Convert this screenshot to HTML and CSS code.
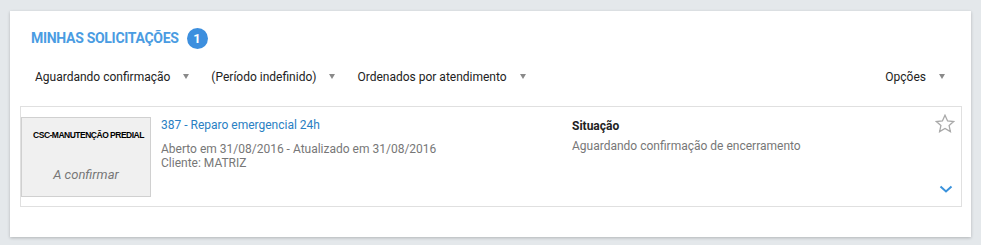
FILE: index.html
```html
<!DOCTYPE html>
<html lang="pt-BR">
<head>
<meta charset="utf-8">
<title>Minhas solicitações</title>
<link rel="stylesheet" href="styles.css">
</head>
<body>
<div class="card">
  <div class="header">
    <h2 class="title">MINHAS SOLICITAÇÕES</h2>
    <span class="badge">1</span>
  </div>
  <div class="filters">
    <div class="filter">Aguardando confirmação <span class="caret"></span></div>
    <div class="filter">(Período indefinido) <span class="caret"></span></div>
    <div class="filter">Ordenados por atendimento <span class="caret"></span></div>
    <div class="filter options">Opções <span class="caret"></span></div>
  </div>
  <div class="item">
    <div class="thumb">
      <div class="thumb-org">CSC-MANUTENÇÃO PREDIAL</div>
      <div class="thumb-status">A confirmar</div>
    </div>
    <div class="info">
      <a class="item-title" href="#">387 - Reparo emergencial 24h</a>
      <div class="meta">Aberto em 31/08/2016 - Atualizado em 31/08/2016</div>
      <div class="meta">Cliente: MATRIZ</div>
    </div>
    <div class="status">
      <div class="status-label">Situação</div>
      <div class="status-value">Aguardando confirmação de encerramento</div>
    </div>
    <div class="actions">
      <svg class="star" width="20" height="19" viewBox="0 0 20 19"><path d="M10 1.2 L12.6 6.9 L18.7 7.5 L14.1 11.6 L15.4 17.6 L10 14.5 L4.6 17.6 L5.9 11.6 L1.3 7.5 L7.4 6.9 Z" fill="none" stroke="#a9a9a9" stroke-width="1.3" stroke-linejoin="miter"/></svg>
      <svg class="chev" width="14" height="8" viewBox="0 0 14 8"><path d="M1.5 1.5 L7 6.5 L12.5 1.5" fill="none" stroke="#3a92dc" stroke-width="2"/></svg>
    </div>
  </div>
</div>
</body>
</html>
```
FILE: styles.css
```css
html, body {
  margin: 0;
  padding: 0;
}
body {
  background: #e4e8eb;
  font-family: Roboto, "Liberation Sans", Arial, sans-serif;
  font-size: 12px;
  color: #333;
  padding: 11px 10px 8px 10px;
}
.card {
  background: #fff;
  box-shadow: 0 1px 3px rgba(0, 0, 0, 0.22);
  padding: 16px 9px 30px 10px;
}
.header {
  display: flex;
  align-items: center;
  height: 22px;
  padding-left: 11px;
}
.title {
  margin: 0;
  font-size: 14px;
  font-weight: 700;
  color: #4a9ce2;
  letter-spacing: -0.3px;
}
.badge {
  margin-left: 8px;
  width: 21px;
  height: 21px;
  border-radius: 50%;
  background: #3d8fde;
  color: #fff;
  font-weight: 700;
  font-size: 13px;
  display: flex;
  align-items: center;
  justify-content: center;
}
.filters {
  display: flex;
  align-items: center;
  height: 36px;
  margin-top: 10px;
  padding-left: 15px;
  padding-right: 17px;
  margin-bottom: 11px;
}
.filter {
  display: flex;
  align-items: center;
  margin-right: 22px;
  color: #222;
}
.filter.options {
  margin-left: auto;
  margin-right: 0;
}
.caret {
  display: inline-block;
  width: 0;
  height: 0;
  border-left: 3px solid transparent;
  border-right: 3px solid transparent;
  border-top: 5px solid #8a8a8a;
  margin-left: 13px;
  margin-top: -2px;
}
.item {
  display: flex;
  border: 1px solid #e0e0e0;
  height: 99px;
  box-sizing: content-box;
}
.thumb {
  width: 128px;
  height: 78px;
  margin-top: 10px;
  background: #f0f0f0;
  border: 1px solid #d0d0d0;
  display: flex;
  flex-direction: column;
  align-items: center;
}
.thumb-org {
  margin-top: 12px;
  font-family: "Liberation Sans", Arial, sans-serif;
  font-size: 8.5px;
  font-weight: 700;
  letter-spacing: -0.5px;
  color: #000;
  padding-left: 5px;
}
.thumb-status {
  margin-top: 27px;
  font-style: italic;
  color: #777;
  font-size: 13px;
}
.info {
  display: flex;
  flex-direction: column;
  margin-left: 10px;
  padding-top: 9px;
  width: 401px;
}
.item-title {
  color: #2a80c3;
  text-decoration: none;
  line-height: 18px;
}
.meta {
  color: #777;
  line-height: 14px;
}
.item-title + .meta {
  margin-top: 8px;
}
.status {
  margin-left: 10px;
  padding-top: 10px;
  flex: 1;
}
.status-label {
  font-weight: 700;
  color: #222;
  line-height: 18px;
}
.status-value {
  color: #777;
  line-height: 18px;
  margin-top: 2px;
}
.actions {
  display: flex;
  flex-direction: column;
  align-items: center;
  justify-content: space-between;
  width: 20px;
  padding: 7px 6px 13px 0;
}
.chev {
  margin-right: -2px;
}
```
